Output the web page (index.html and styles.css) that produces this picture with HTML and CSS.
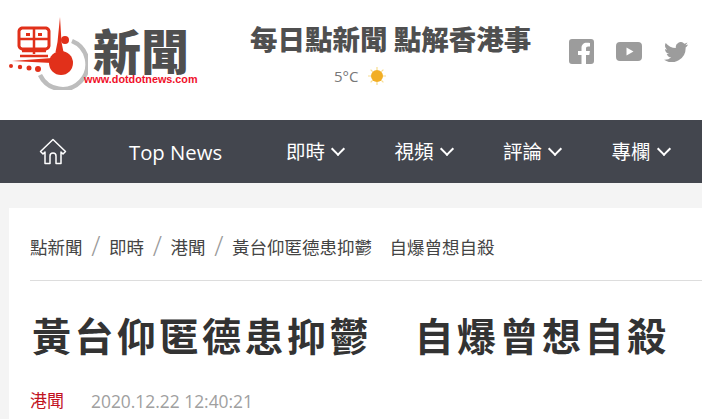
FILE: index.html
```html
<!DOCTYPE html>
<html lang="zh-Hant">
<head>
    <meta charset="UTF-8">
    <title>黃台仰匿德患抑鬱　自爆曾想自殺</title>
    <link rel="stylesheet" href="styles.css">
</head>
<body>
<header class="top">
    <a class="logo" href="#">
        <svg class="logo-mark" width="88" height="90" viewBox="0 0 88 90">
            <path d="M72 41a25 25 0 1 1-32 34" fill="none" stroke="#bdbdbd" stroke-width="4.500"/>
            <path d="M22 28h24a4 4 0 0 1 3 3v15a4 4 0 0 1-3 3H22a4 4 0 0 1-3-3V31a4 4 0 0 1 3-3z" fill="none" stroke="#e1301a" stroke-width="3"/>
            <path d="M34 28v26M19 39h30M22 51h24M20 56h28" fill="none" stroke="#e1301a" stroke-width="2.500"/>
            <rect x="26" y="33" width="4" height="3" fill="#e1301a"/>
            <rect x="38" y="33" width="4" height="3" fill="#e1301a"/>
            <path d="M60 17l1.500 25 2 10h-8l2-10z" fill="#e1301a"/>
            <circle cx="65" cy="40" r="4" fill="#e1301a"/>
            <circle cx="61" cy="63" r="12" fill="#e1301a"/>
            <path d="M12 61l40-3v5z" fill="#e1301a"/>
            <circle cx="11" cy="66" r="2" fill="#e1301a"/>
            <circle cx="20" cy="67" r="2.200" fill="#e1301a"/>
            <circle cx="29" cy="68" r="2.500" fill="#e1301a"/>
            <circle cx="38" cy="69" r="3" fill="#e1301a"/>
        </svg>
        <div class="logo-text">
            <span class="logo-name">新聞</span>
            <span class="logo-url">www.dotdotnews.com</span>
        </div>
    </a>
    <div class="slogan">
        <div class="slogan-text">每日點新聞 點解香港事</div>
        <div class="weather">
            <span>5°C</span>
            <svg width="18" height="18" viewBox="0 0 18 18">
                <path d="M9 0v3M9 15v3M0 9h3M15 9h3M2.600 2.600l2 2M13.400 13.400l2 2M2.600 15.400l2-2M13.400 4.600l2-2" stroke="#f7dc8e" stroke-width="1.200"/>
                <circle cx="9" cy="9" r="6" fill="#f2ae24"/>
            </svg>
        </div>
    </div>
    <div class="social">
        <svg width="25" height="25" viewBox="0 0 25 25">
            <path d="M3 0h19a3 3 0 0 1 3 3v19a3 3 0 0 1-3 3h-5v-9h3.300l.6-4H17V9.500c0-1.200.6-2 2.100-2H21V4.100C20.200 4 19 3.800 17.800 3.800c-3.300 0-5.300 2-5.300 5.200v3H9v4h3.500v9H3a3 3 0 0 1-3-3V3a3 3 0 0 1 3-3z" fill="#9c9c9c"/>
        </svg>
        <svg width="26" height="19" viewBox="0 0 26 19">
            <path d="M4 0h18a4 4 0 0 1 4 4v11a4 4 0 0 1-4 4H4a4 4 0 0 1-4-4V4a4 4 0 0 1 4-4zm6.500 5.500v8l7-4z" fill="#9c9c9c" fill-rule="evenodd"/>
        </svg>
        <svg width="24" height="20" viewBox="0 0 24 20">
            <path d="M24 2.400c-.9.400-1.800.6-2.800.8 1-.6 1.800-1.600 2.200-2.700-1 .6-2 1-3.100 1.200A4.900 4.900 0 0 0 11.900 6.100C7.800 5.900 4.200 4 1.700.9.400 3.100 1 6 3.200 7.500c-.8 0-1.600-.2-2.200-.6 0 2.400 1.700 4.400 3.900 4.900-.7.200-1.500.2-2.200.1.600 2 2.400 3.400 4.600 3.400A9.900 9.900 0 0 1 0 17.800 13.900 13.900 0 0 0 21.600 5.400c1-.7 1.800-1.600 2.400-3z" fill="#9c9c9c"/>
        </svg>
    </div>
</header>
<nav class="nav">
    <a class="nav-home" href="#">
        <svg width="28" height="28" viewBox="0 0 28 28" fill="none" stroke="#fff" stroke-width="1.500" stroke-linejoin="round">
            <path d="M1.500 13.500L14 1.500l12.500 12-2.500 2.500-2-2v11.500h-5V18a3 3 0 0 0-6 0v7.500H6V14l-2 2z"/>
        </svg>
    </a>
    <a class="nav-item nav-en" href="#">Top News</a>
    <a class="nav-item" href="#">即時<i class="chev"></i></a>
    <a class="nav-item" href="#">視頻<i class="chev"></i></a>
    <a class="nav-item" href="#">評論<i class="chev"></i></a>
    <a class="nav-item" href="#">專欄<i class="chev"></i></a>
</nav>
<main class="page">
    <article class="card">
        <div class="crumbs">
            <a href="#">點新聞</a><span class="sep">/</span>
            <a href="#">即時</a><span class="sep">/</span>
            <a href="#">港聞</a><span class="sep">/</span>
            <span>黃台仰匿德患抑鬱　自爆曾想自殺</span>
        </div>
        <h1 class="title">黃台仰匿德患抑鬱　自爆曾想自殺</h1>
        <div class="meta">
            <a class="meta-cat" href="#">港聞</a>
            <span class="meta-date">2020.12.22 12:40:21</span>
        </div>
    </article>
</main>
</body>
</html>
```

FILE: styles.css
```css
*{
    margin: 0;
    padding: 0;
    box-sizing: border-box;
}
html,body{
    height: 100%;
    overflow: hidden;
}
body{
    background: #f4f4f4;
    font-family: "Open Sans","Noto Sans CJK TC",sans-serif;
    color: #333;
    display: flex;
    flex-direction: column;
}
a{
    color: inherit;
    text-decoration: none;
}
.top{
    height: 120px;
    flex: none;
    background: #fff;
    display: flex;
    align-items: flex-start;
}
.logo{
    width: 250px;
    display: flex;
}
.logo-mark{
    flex: none;
}
.logo-text{
    margin-left: 5px;
    padding-top: 24px;
    display: flex;
    flex-direction: column;
}
.logo-name{
    font-family: "Noto Sans CJK TC",sans-serif;
    font-size: 48px;
    line-height: 50px;
    font-weight: 900;
    color: #4f4f4f;
}
.logo-url{
    margin-left: -9px;
    font-family: "Liberation Sans",sans-serif;
    font-size: 10.800px;
    line-height: 10px;
    font-weight: 700;
    color: #f0102a;
    white-space: nowrap;
}
.slogan{
    width: 298px;
    padding-top: 19px;
}
.slogan-text{
    font-family: "Noto Sans CJK TC",sans-serif;
    font-size: 27.500px;
    line-height: 38px;
    font-weight: 900;
    color: #4f4f4f;
    white-space: nowrap;
}
.weather{
    margin-top: 9px;
    padding-left: 84px;
    display: flex;
    align-items: center;
    gap: 10px;
    font-size: 15px;
    color: #777;
}
.social{
    padding: 39px 0 0 21px;
    display: flex;
    align-items: center;
    gap: 22px;
}
.nav{
    height: 63px;
    flex: none;
    background: #43464e;
    display: flex;
    align-items: center;
    color: #fff;
}
.nav-home{
    flex: none;
    width: 106px;
    padding-left: 39px;
    display: flex;
}
.nav-item{
    flex: none;
    display: flex;
    align-items: center;
    width: 108.500px;
    font-size: 19.500px;
    line-height: 28px;
    white-space: nowrap;
}
.nav-en{
    width: 180px;
    padding-left: 23px;
    font-size: 20.300px;
}
.chev{
    width: 10px;
    height: 10px;
    margin: -5px 0 0 8px;
    border-right: 2.500px solid #fff;
    border-bottom: 2.500px solid #fff;
    transform: rotate(45deg);
}
.page{
    flex: 1;
    padding: 25px 0 0 9px;
}
.card{
    background: #fff;
    padding-left: 21px;
    height: 100%;
}
.crumbs{
    height: 73px;
    padding-top: 4px;
    display: flex;
    align-items: center;
    font-size: 17.500px;
    color: #444;
    border-bottom: 1px solid #ddd;
    white-space: nowrap;
}
.sep{
    width: 26.500px;
    text-align: center;
    font-size: 27px;
    line-height: 28px;
    font-weight: 300;
    color: #999;
}
.title{
    margin: 27px 0 0 2px;
    font-size: 39px;
    line-height: 56px;
    font-weight: 700;
    letter-spacing: 3.500px;
    white-space: nowrap;
}
.meta{
    margin-top: 25px;
    display: flex;
    align-items: center;
    line-height: 24px;
}
.meta-cat{
    font-size: 17px;
    color: #c1121f;
    margin-right: 27px;
}
.meta-date{
    font-size: 17.400px;
    color: #a0a0a0;
}
```
